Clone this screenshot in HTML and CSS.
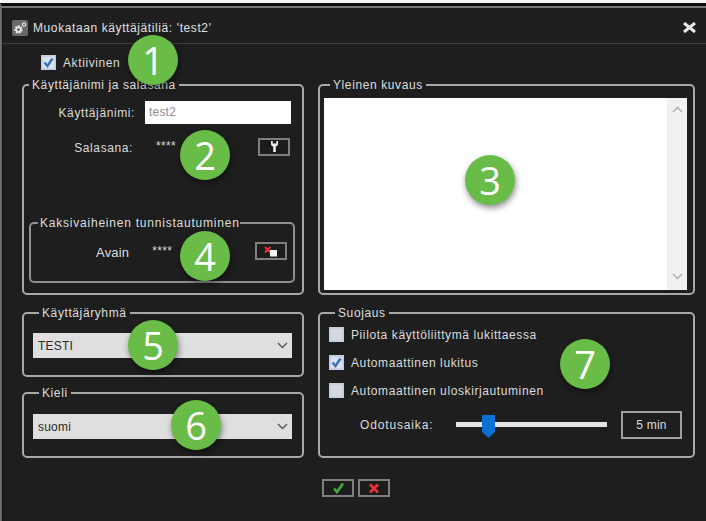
FILE: index.html
```html
<!DOCTYPE html>
<html lang="fi">
<head>
<meta charset="utf-8">
<title>Muokataan käyttäjätiliä</title>
<link rel="stylesheet" href="styles.css">
</head>
<body>
<div class="window">
  <header class="titlebar">
    <span class="app-icon">
      <svg width="16" height="16" viewBox="0 0 16 16"><rect width="16" height="16" rx="2" fill="#6a6a6a"/><circle cx="6.5" cy="9.5" r="3.2" fill="none" stroke="#eee" stroke-width="2" stroke-dasharray="1.8 1"/><circle cx="6.5" cy="9.5" r="2.2" fill="none" stroke="#eee" stroke-width="1.4"/><circle cx="12" cy="4.5" r="1.7" fill="none" stroke="#ddd" stroke-width="1.2"/></svg>
    </span>
    <span class="title">Muokataan käyttäjätiliä: 'test2'</span>
    <svg class="close" width="15" height="11" viewBox="0 0 15 11"><path d="M2 1 L13 10 M13 1 L2 10" stroke="#e8e8e8" stroke-width="3"/></svg>
  </header>

  <main class="content">
    <label class="check-row active-row">
      <span class="box checked"><svg width="11" height="11" viewBox="0 0 11 11"><path d="M1.5 5.5 L4.5 9 L9.5 1.5" fill="none" stroke="#3a6fc0" stroke-width="2.4"/></svg></span>
      <span>Aktiivinen</span>
    </label>

    <div class="columns">
      <div class="col">
        <fieldset class="group account">
          <legend>Käyttäjänimi ja salasana</legend>
          <div class="field-row user-row">
            <span class="field-label">Käyttäjänimi:</span>
            <span class="text-input">test2</span>
          </div>
          <div class="field-row pass-row">
            <span class="field-label">Salasana:</span>
            <span class="stars">****</span>
            <button class="icon-btn"><svg width="9" height="11" viewBox="0 0 9 11"><path d="M1 0 V3 Q1 5 3.2 5.5 V11 H5.8 V5.5 Q8 5 8 3 V0 H6.3 V2.6 H2.7 V0 Z" fill="#eee"/></svg></button>
          </div>
          <fieldset class="group two-factor">
            <legend>Kaksivaiheinen tunnistautuminen</legend>
            <div class="field-row key-row">
              <span class="key-label">Avain</span>
              <span class="stars">****</span>
              <button class="icon-btn"><svg width="14" height="11" viewBox="0 0 14 11"><path d="M1 1 L6.5 6.5 M6.5 1 L1 6.5" stroke="#e8303a" stroke-width="2"/><rect x="6" y="4" width="7" height="6.5" fill="#f2f2f2"/></svg></button>
            </div>
          </fieldset>
        </fieldset>

        <fieldset class="group select-group">
          <legend>Käyttäjäryhmä</legend>
          <div class="select"><span>TESTI</span><svg width="11" height="7" viewBox="0 0 11 7"><path d="M1 1 L5.5 5.5 L10 1" fill="none" stroke="#555" stroke-width="1.4"/></svg></div>
        </fieldset>

        <fieldset class="group select-group">
          <legend>Kieli</legend>
          <div class="select"><span>suomi</span><svg width="11" height="7" viewBox="0 0 11 7"><path d="M1 1 L5.5 5.5 L10 1" fill="none" stroke="#555" stroke-width="1.4"/></svg></div>
        </fieldset>
      </div>

      <div class="col">
        <fieldset class="group description">
          <legend>Yleinen kuvaus</legend>
          <div class="textarea">
            <div class="scrollbar">
              <svg width="11" height="7" viewBox="0 0 11 7"><path d="M1 6 L5.5 1.5 L10 6" fill="none" stroke="#b4b4b4" stroke-width="1.6"/></svg>
              <svg width="11" height="7" viewBox="0 0 11 7"><path d="M1 1 L5.5 5.5 L10 1" fill="none" stroke="#b4b4b4" stroke-width="1.6"/></svg>
            </div>
          </div>
        </fieldset>

        <fieldset class="group security">
          <legend>Suojaus</legend>
          <label class="check-row"><span class="box"></span><span>Piilota käyttöliittymä lukittaessa</span></label>
          <label class="check-row"><span class="box checked"><svg width="11" height="11" viewBox="0 0 11 11"><path d="M1.5 5.5 L4.5 9 L9.5 1.5" fill="none" stroke="#3a6fc0" stroke-width="2.4"/></svg></span><span>Automaattinen lukitus</span></label>
          <label class="check-row"><span class="box"></span><span>Automaattinen uloskirjautuminen</span></label>
          <div class="timeout-row">
            <span class="timeout-label">Odotusaika:</span>
            <div class="slider">
              <span class="thumb"><svg width="13" height="23" viewBox="0 0 13 23"><path d="M0 0 H13 V17 L6.5 23 L0 17 Z" fill="#0b6fd6"/></svg></span>
            </div>
            <span class="value-box">5 min</span>
          </div>
        </fieldset>
      </div>
    </div>

    <footer class="actions">
      <button class="icon-btn action"><svg width="13" height="12" viewBox="0 0 13 12"><path d="M2 6.5 L5 10 L11 1.5" fill="none" stroke="#3fae3c" stroke-width="2.6"/></svg></button>
      <button class="icon-btn action"><svg width="12" height="11" viewBox="0 0 12 11"><path d="M2 1.5 L10 9.5 M10 1.5 L2 9.5" stroke="#ee3338" stroke-width="2.6"/></svg></button>
    </footer>
  </main>

  <span class="badge b1">1</span>
  <span class="badge b2">2</span>
  <span class="badge b3">3</span>
  <span class="badge b4">4</span>
  <span class="badge b5">5</span>
  <span class="badge b6">6</span>
  <span class="badge b7">7</span>
</div>
</body>
</html>
```

FILE: styles.css
```css
* { box-sizing: border-box; }

html, body {
  margin: 0;
  height: 521px;
  overflow: hidden;
  background: #f4f4f4;
}

body {
  padding-top: 3px;
  font-family: "Liberation Sans", Arial, sans-serif;
  font-size: 12px;
  letter-spacing: 0.6px;
  color: #dcdcdc;
}

.window {
  position: relative;
  height: 518px;
  background: #1e1e1e;
  border-top: 3px solid #0c0c0c;
  border-left: 2px solid #6e6e6e;
  box-shadow: inset 1px 0 0 #0f0f0f;
  overflow: hidden;
}

.titlebar {
  display: flex;
  align-items: center;
  height: 38px;
  padding: 4px 9px 0 10px;
  border-top: 2px solid #777;
  border-bottom: 1px solid #3c3c3c;
}

.app-icon { display: flex; width: 16px; height: 16px; }

.title {
  margin-left: 5px;
  flex: 1;
  color: #e0e0e0;
}

.content { padding: 0 0 0 20px; }

.check-row {
  display: flex;
  align-items: center;
  gap: 7px;
  height: 15px;
}

.active-row { margin: 11px 0 8px 19px; }

.box {
  display: flex;
  align-items: center;
  justify-content: center;
  width: 15px;
  height: 15px;
  background: #d9d9dc;
  border: 2px solid #c2d0e2;
  flex: none;
}

.box.checked { background: #dbe5f2; }

.columns {
  display: grid;
  grid-template-columns: 282px 376px;
  column-gap: 15px;
  margin-right: 12px;
}

.col {
  display: flex;
  flex-direction: column;
}

.col + .col { margin-left: -1px; }

.group {
  margin: 0;
  padding: 0;
  min-width: 0;
  border: 2px solid #a8a8a8;
  border-radius: 5px;
}

.group legend {
  margin-left: 6px;
  padding: 0 3px;
  height: 14px;
  line-height: 14px;
  color: #dedede;
}

.account { height: 217px; padding: 9px 0 0 0; }

.account > legend { margin-left: 5px; }

.field-row { display: flex; align-items: center; }

.user-row { height: 23px; }

.field-label {
  width: 111px;
  text-align: right;
}

.text-input {
  margin-left: 10px;
  width: 146px;
  height: 23px;
  padding-left: 4px;
  line-height: 23px;
  background: #fff;
  color: #8d8d8d;
  letter-spacing: 0.2px;
}

.pass-row { margin-top: 14px; height: 17px; }

.pass-row .field-label { width: 109px; padding-top: 3px; }

.stars {
  margin-left: 23px;
  font-size: 12px;
  line-height: 11px;
  letter-spacing: 0.3px;
  color: #d8d8d8;
}

.icon-btn {
  display: flex;
  align-items: center;
  justify-content: center;
  width: 32px;
  height: 18px;
  padding: 0;
  margin-left: auto;
  background: #1c1c1c;
  border: 2px solid #7f7f7f;
}

.pass-row .icon-btn { margin-right: 12px; }

.two-factor {
  margin: 61px 0 0 5px;
  width: 266px;
  height: 67px;
  border-color: #909090;
  padding-top: 12px;
}

.two-factor legend {
  margin-left: 7px;
  padding: 0 0 0 2px;
  letter-spacing: 0.78px;
}

.key-row { height: 18px; }

.key-label { margin-left: 65px; font-size: 13px; letter-spacing: 0.2px; padding-top: 2px; }

.key-row .stars { margin-left: 23px; }

.key-row .icon-btn { margin-right: 6px; }

.select-group { margin-top: 11px; height: 71px; padding: 13px 10px 0 9px; }

.select-group + .select-group { margin-top: 9px; height: 72px; padding-top: 14px; }

.select {
  display: flex;
  align-items: center;
  justify-content: space-between;
  height: 25px;
  padding: 0 4px 0 5px;
  background: #dfdfdf;
  color: #2a2a2a;
  letter-spacing: 0.2px;
}

.description { height: 217px; padding: 6px 4px 0 4px; }

.textarea {
  height: 192px;
  width: 363px;
  background: #fff;
  display: flex;
  justify-content: flex-end;
}

.scrollbar {
  display: flex;
  flex-direction: column;
  justify-content: space-between;
  align-items: center;
  width: 20px;
  padding: 8px 0 10px;
  background: #f0f0f0;
}

.security { margin-top: 11px; height: 152px; padding: 7px 0 0 9px; }

.security .check-row { margin-bottom: 13px; }

.timeout-row {
  display: flex;
  align-items: center;
  margin-top: 3px;
  height: 28px;
}

.timeout-label {
  margin-left: 31px;
  width: 96px;
  letter-spacing: 0.85px;
}

.slider {
  position: relative;
  width: 151px;
  height: 5px;
  margin-bottom: 2px;
  background: #e4e4e4;
}

.thumb {
  position: absolute;
  left: 26px;
  top: -7px;
  display: flex;
}

.value-box {
  margin-left: 14px;
  width: 61px;
  height: 28px;
  line-height: 24px;
  text-align: center;
  border: 2px solid #a0a0a0;
  letter-spacing: 0.2px;
}

.actions {
  display: flex;
  gap: 4px;
  margin-top: 21px;
  padding-left: 300px;
}

.action { margin: 0; }

.badge {
  position: absolute;
  width: 50px;
  height: 50px;
  line-height: 50px;
  border-radius: 50%;
  text-align: center;
  font-family: "Open Sans", "Liberation Sans", sans-serif;
  font-size: 38px;
  letter-spacing: 0;
  color: #fff;
  background: #69bc47;
  box-shadow: 1px 3px 6px rgba(0, 0, 0, 0.45);
}

.b1 { left: 126px; top: 29px; }
.b2 { left: 178px; top: 124px; }
.b3 { left: 463px; top: 149px; }
.b4 { left: 178px; top: 225px; }
.b5 { left: 126px; top: 314px; }
.b6 { left: 169px; top: 394px; }
.b7 { left: 558px; top: 333px; }
```
